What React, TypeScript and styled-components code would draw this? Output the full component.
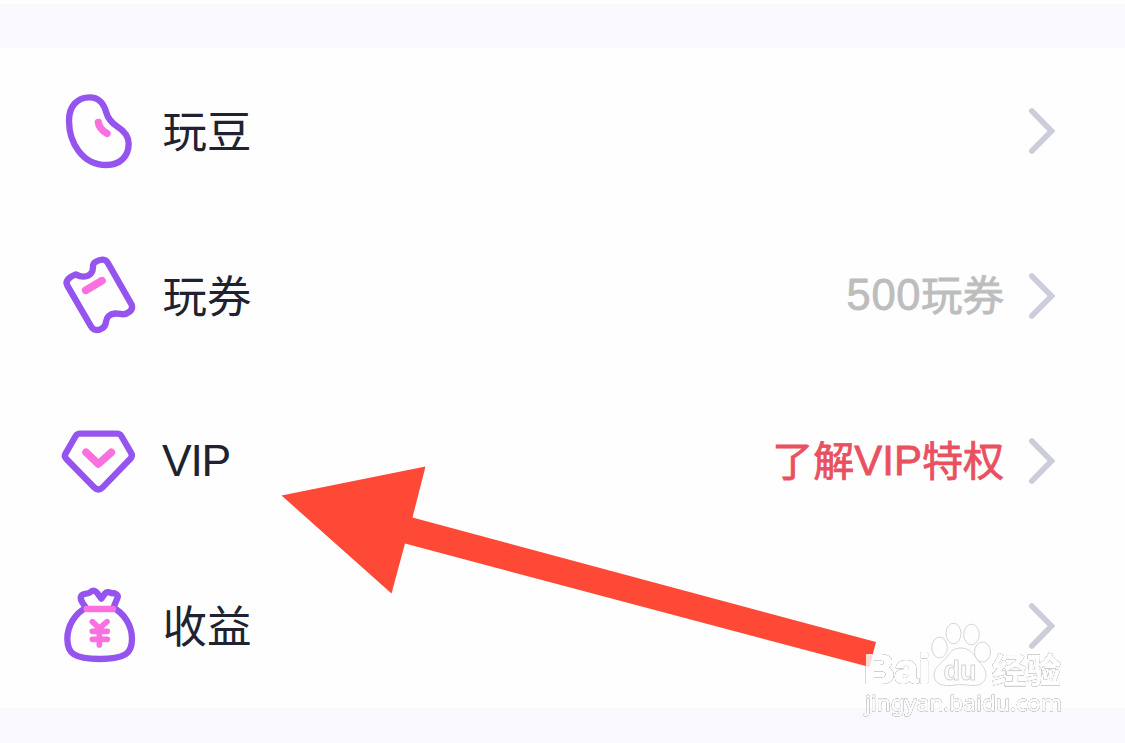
import React from 'react';
import styled, { createGlobalStyle } from 'styled-components';

const GlobalStyle = createGlobalStyle`
  body {
    margin: 0;
    background: #fefefe;
    overflow: hidden;
    font-family: 'Liberation Sans', 'Noto Sans CJK SC', sans-serif;
  }
`;

const Page = styled.main`
  position: relative;
  width: 1125px;
  height: 743px;
  padding-top: 4px;
  box-sizing: border-box;
  overflow: hidden;
  background: #fefefe;
`;

const Band = styled.div`
  height: 44px;
  background: #f9f9fd;
`;

const List = styled.ul`
  margin: 0;
  padding: 0;
  list-style: none;
  background: #fefefe;
`;

const Row = styled.li`
  display: flex;
  align-items: center;
  height: 165px;
  box-sizing: border-box;
  padding: 0 69px 0 58px;
`;

const IconBox = styled.svg`
  width: 80px;
  height: 100px;
  flex: none;
  margin-bottom: 1px;
  fill: none;
  stroke: #9654ee;
  stroke-width: 19;
  stroke-linecap: round;
  stroke-linejoin: round;
`;

const Label = styled.span<{ $latin?: boolean }>`
  flex: 1;
  margin-left: ${(p) => (p.$latin ? '24px' : '24.5px')};
  padding-top: ${(p) => (p.$latin ? '1px' : '4px')};
  font-size: 44.5px;
  line-height: 64px;
  letter-spacing: ${(p) => (p.$latin ? '-1.3px' : '0')};
  color: #20232f;
`;

const Value = styled.span<{ $color: string }>`
  padding-top: 1px;
  font-size: 42px;
  line-height: 64px;
  white-space: nowrap;
  color: ${(p) => p.$color};
  -webkit-text-stroke: 0.8px ${(p) => p.$color};
`;

const Part = styled.span<{ $size: number; $drop?: number; $spacing?: number }>`
  font-size: ${(p) => p.$size}px;
  line-height: 1;
  vertical-align: ${(p) => -(p.$drop ?? 0)}px;
  letter-spacing: ${(p) => p.$spacing ?? 0}px;
`;

const Chevron = styled.svg`
  width: 28px;
  height: 48px;
  flex: none;
  margin-left: 24px;
  fill: none;
  stroke: #cccddb;
  stroke-width: 5.6;
  stroke-linecap: round;
  stroke-linejoin: miter;
`;

const Overlay = styled.svg`
  position: absolute;
  inset: 0;
  width: 1125px;
  height: 743px;
  pointer-events: none;
`;

const Mark = styled.g`
  fill: #fff;
  stroke: #fff;
  stroke-linejoin: round;
  opacity: 0.78;
`;

const Lettering = styled.g`
  filter: drop-shadow(0 0 0.7px rgba(0, 0, 0, 0.6)) drop-shadow(0 0 0.5px rgba(0, 0, 0, 0.4));
`;

const PINK = '#fb70df';

const BeanIcon = () => (
  <IconBox viewBox="24 0 240 300">
    <path d="M57 122C57 78 82 52 119 52C149 52 162 72 169 98C174 116 184 128 201 139C222 152 236 169 236 191C236 231 208 255 169 255C96 255 57 186 57 122Z" />
    <path d="M145 127C147 143 157 152 171 160" stroke={PINK} strokeWidth="22" />
  </IconBox>
);

const TicketIcon = () => (
  <IconBox viewBox="24 0 240 300">
    <path d="M77 88C62 94 43 106 52 122L123 244C130 257 144 258 156 250C174 242 162 226 176 213C190 200 205 206 218 208C232 207 252 196 245 179L173 53C167 42 153 41 136 51C123 58 134 72 124 84C112 99 92 96 77 88Z" />
    <path d="M107 136L156 107" stroke={PINK} strokeWidth="23" />
  </IconBox>
);

const DiamondIcon = () => (
  <IconBox viewBox="24 -15 240 300">
    <path d="M89 56H202Q209 56 214 63L243 113Q249 123 241 131L158 217Q145 230 132 217L50 133Q41 124 47 115L77 63Q82 56 89 56Z" />
    <path d="M108 112L145 147L184 112" stroke={PINK} strokeWidth="23" />
  </IconBox>
);

const BagIcon = () => (
  <IconBox viewBox="24 -1 240 300">
    <path d="M108 98C100 84 85 71 96 59C105 52 115 58 122 50Q134 40 143 55L154 70L165 55Q170 47 184 53C197 53 208 58 201 71L190 98C221 112 246 151 246 190C246 235 225 251 149 251C73 251 52 235 52 190C52 151 76 113 108 98Z" />
    <path d="M110 101H189" stroke={PINK} />
    <path d="M127 139L148 159L171 139M127 168H172M127 192H172M148 160V209" stroke={PINK} strokeWidth="17" />
  </IconBox>
);

type Item = {
  label: string;
  latin?: boolean;
  Icon: React.FC;
  value?: React.ReactNode;
};

const items: Item[] = [
  { label: '玩豆', Icon: BeanIcon },
  {
    label: '玩券',
    Icon: TicketIcon,
    value: (
      <Value $color="#bdbdbd">
        <Part $size={43.5} $spacing={0.6}>500</Part>
        <Part $size={41.5} $drop={1}>玩券</Part>
      </Value>
    ),
  },
  {
    label: 'VIP',
    latin: true,
    Icon: DiamondIcon,
    value: (
      <Value $color="#e95060">
        <Part $size={41} $drop={1}>了解</Part>
        <Part $size={42}>VIP</Part>
        <Part $size={41} $drop={1}>特权</Part>
      </Value>
    ),
  },
  { label: '收益', Icon: BagIcon },
];

const Watermark = () => (
  <Mark>
    <Lettering>
      <text x="864" y="683" fontSize="41" fontWeight="700" strokeWidth="2" textLength="66" lengthAdjust="spacingAndGlyphs">Bai</text>
      <text x="992" y="682.5" fontSize="34.5" fontWeight="700" strokeWidth="0.8" fontFamily="'Noto Sans CJK SC', sans-serif">经验</text>
      <text x="865" y="711" fontSize="22.5" fontFamily="'Noto Sans', sans-serif" strokeWidth="0.8" textLength="197" lengthAdjust="spacingAndGlyphs">jingyan.baidu.com</text>
    </Lettering>
    <g stroke="#c8c8c8" strokeWidth="1">
      <ellipse cx="939.5" cy="647.5" rx="7.8" ry="10.3" />
      <ellipse cx="953.5" cy="633.5" rx="7.5" ry="10.3" />
      <ellipse cx="971.5" cy="634.5" rx="7.8" ry="10.3" />
      <ellipse cx="982.5" cy="652" rx="8" ry="10" />
      <path d="M961 648C969 648 973 653 976 658C979 663 986 667 986 675C986 682 980 686 973 685.5C966 685 961 684 955 685C945 687 934 685 934 675C934 667 942 663 946 658C950 652 953 648 961 648Z" />
      <text x="943.5" y="680" fontSize="28.5" fontWeight="700" textLength="33" lengthAdjust="spacingAndGlyphs">du</text>
    </g>
  </Mark>
);

export default function App() {
  return (
    <>
      <GlobalStyle />
      <Page>
        <Band />
        <List>
          {items.map(({ label, latin, Icon, value }) => (
            <Row key={label}>
              <Icon />
              <Label $latin={latin}>{label}</Label>
              {value}
              <Chevron viewBox="0 0 28 48">
                <path d="M3.8 4L23.5 24L3.8 44" />
              </Chevron>
            </Row>
          ))}
        </List>
        <Band />
        <Overlay viewBox="0 0 1125 743">
          <path d="M281.5 495.5L425.5 466.5L412.5 517.5L876 642L869.5 667L405 543.5L391.5 593.5Z" fill="#fe4937" />
          <Watermark />
        </Overlay>
      </Page>
    </>
  );
}
